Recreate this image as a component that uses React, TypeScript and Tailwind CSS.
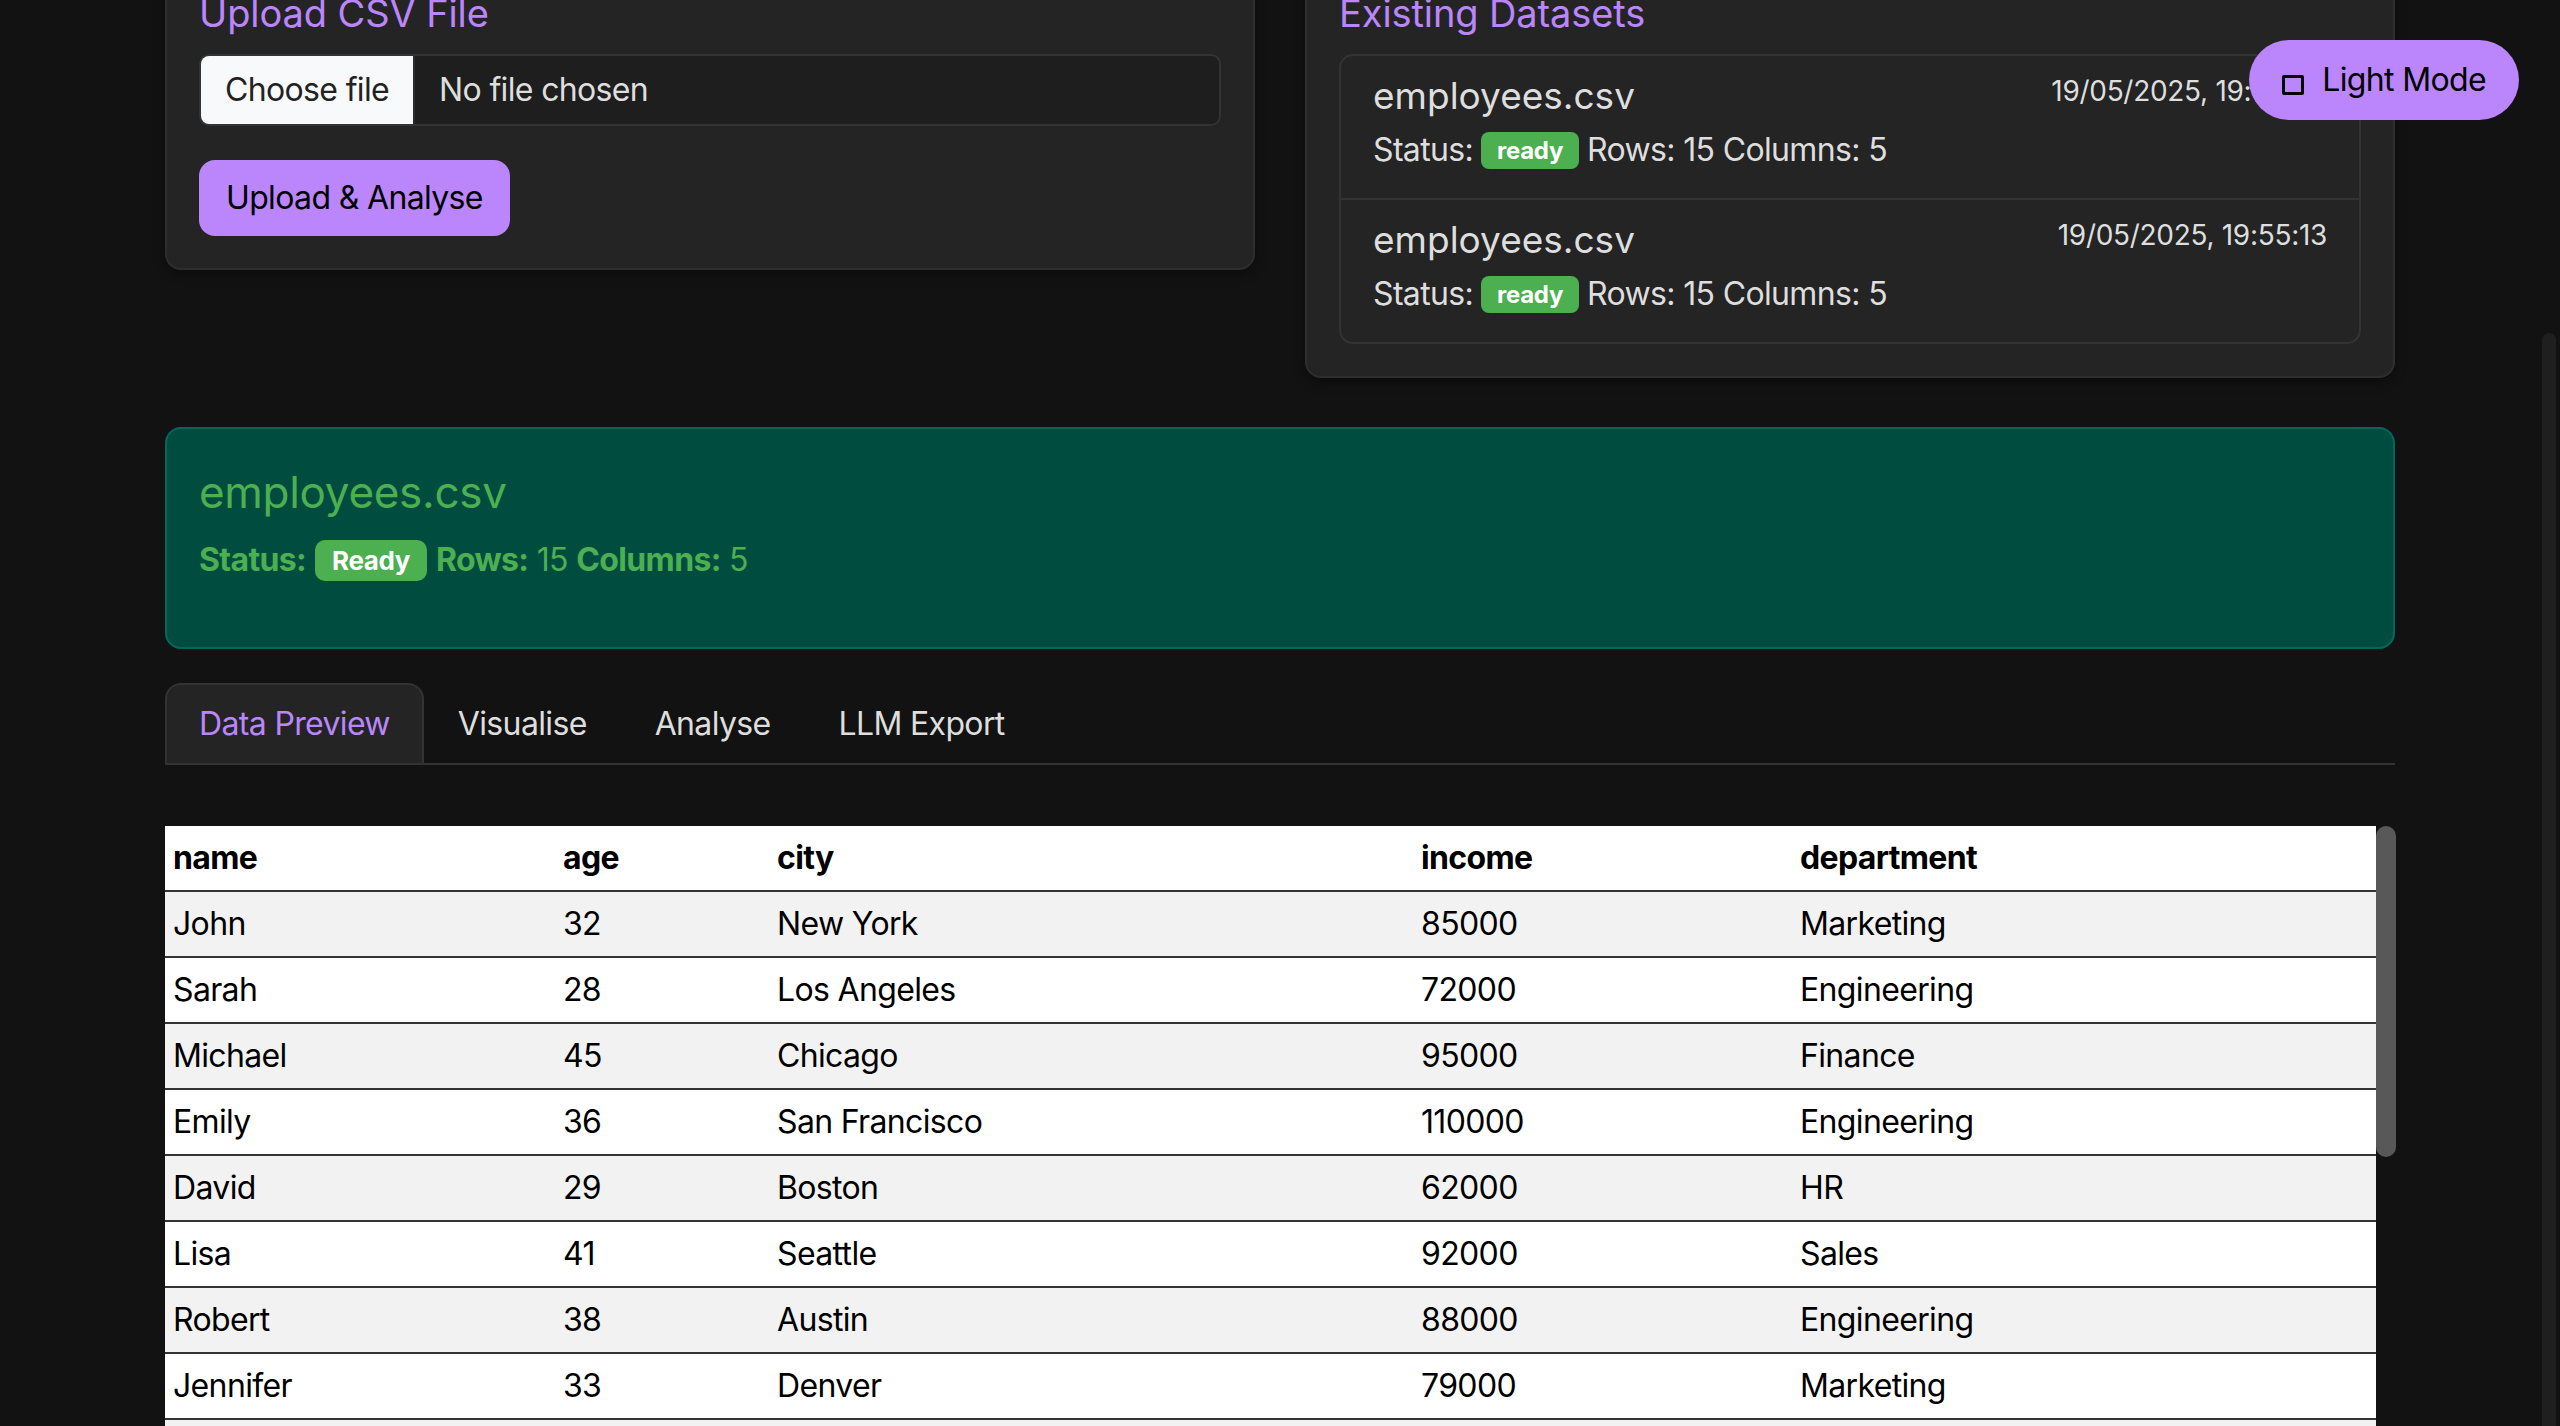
import React from "react";

const rows = [
  ["John", "32", "New York", "85000", "Marketing"],
  ["Sarah", "28", "Los Angeles", "72000", "Engineering"],
  ["Michael", "45", "Chicago", "95000", "Finance"],
  ["Emily", "36", "San Francisco", "110000", "Engineering"],
  ["David", "29", "Boston", "62000", "HR"],
  ["Lisa", "41", "Seattle", "92000", "Sales"],
  ["Robert", "38", "Austin", "88000", "Engineering"],
  ["Jennifer", "33", "Denver", "79000", "Marketing"],
  ["James", "44", "Chicago", "105000", "Finance"],
  ["Amanda", "31", "Portland", "71000", "HR"],
];

function DatasetItem({ time, last }: { time: string; last?: boolean }) {
  return (
    <div className={`px-[32px] pt-[14px] pb-[24px] ${last ? "" : "border-b-2 border-[#333]"}`}>
      <div className="flex items-start justify-between">
        <div className="mt-[4px] text-[37px] leading-[43px] text-[#dedede] tracking-[0px]">employees.csv</div>
        <div className="text-[28px] leading-[42px] text-[#dedede] tracking-[-0.3px]">{time}</div>
      </div>
      <div className="mt-[9px] flex items-center gap-[8px] text-[32px] leading-[48px] text-[#dedede]">
        <span>Status:</span>
        <span className="h-[37px] px-[16px] rounded-[8px] bg-[#4caf50] text-white font-bold text-[24px] leading-[37px] tracking-[-0.3px]">ready</span>
        <span>Rows: 15 Columns: 5</span>
      </div>
    </div>
  );
}

export default function App() {
  return (
    <div className="relative h-[1426px] overflow-hidden bg-[#121212] text-[#dedede] font-['Inter','Noto_Sans',sans-serif] text-[32px] leading-[48px] tracking-[-0.65px]">
      <div className="w-[2230px] mx-auto -mt-[43px]">
        <div className="grid grid-cols-2 gap-[50px] items-start">
          {/* Upload card */}
          <div className="rounded-[16px] border-2 border-[#2e2e2e] bg-[#242424] px-[32px] pt-[32px] pb-[32px] shadow-[0_4px_12px_rgba(0,0,0,0.35)]">
            <h3 className="text-[38px] leading-[45px] text-[#bb86fc] mb-[18px] tracking-[-0.1px]">Upload CSV File</h3>
            <div className="flex h-[72px] w-full overflow-hidden rounded-[10px] border-2 border-[#333] bg-[#1e1e1e]">
              <div className="flex items-center bg-[#f8f9fa] px-[24px] text-[#222] border-r-2 border-[#2a2a2a]">Choose file</div>
              <div className="flex items-center pl-[24px] text-[#dedede]">No file chosen</div>
            </div>
            <button className="mt-[34px] h-[76px] rounded-[16px] bg-[#bb86fc] px-[27px] text-black text-[32px]">Upload &amp; Analyse</button>
          </div>

          {/* Existing datasets */}
          <div className="rounded-[16px] border-2 border-[#2e2e2e] bg-[#242424] px-[32px] pt-[32px] pb-[32px] shadow-[0_4px_12px_rgba(0,0,0,0.35)]">
            <h3 className="text-[38px] leading-[45px] text-[#bb86fc] mb-[18px] tracking-[-0.1px]">Existing Datasets</h3>
            <div className="rounded-[14px] border-2 border-[#333]">
              <DatasetItem time="19/05/2025, 19:56:02" />
              <DatasetItem time="19/05/2025, 19:55:13" last />
            </div>
          </div>
        </div>

        {/* Selected dataset */}
        <div className="mt-[49px] rounded-[16px] border-2 border-[#00695c] bg-[#004d40] px-[32px] pt-[37px] pb-[63px]">
          <h2 className="text-[44px] leading-[52px] text-[#4caf50] tracking-[-0.3px]">employees.csv</h2>
          <div className="mt-[18px] flex items-center gap-[9px] text-[32px] leading-[48px] text-[#4caf50]">
            <span className="font-bold">Status:</span>
            <span className="h-[41px] px-[17px] rounded-[10px] bg-[#4caf50] text-white font-bold text-[26px] leading-[41px] tracking-[-0.4px]">Ready</span>
            <span>
              <span className="font-bold">Rows:</span> 15 <span className="font-bold">Columns:</span> 5
            </span>
          </div>
        </div>

        {/* Tabs */}
        <div className="mt-[34px] flex border-b-2 border-[#333]">
          <div className="rounded-t-[16px] border-2 border-b-0 border-[#333] bg-[#242424] px-[32px] py-[15px] text-[#bb86fc]">Data Preview</div>
          <div className="border-2 border-b-0 border-transparent px-[32px] py-[15px] text-[#dedede]">Visualise</div>
          <div className="border-2 border-b-0 border-transparent px-[32px] py-[15px] text-[#dedede]">Analyse</div>
          <div className="border-2 border-b-0 border-transparent px-[32px] py-[15px] text-[#dedede]">LLM Export</div>
        </div>

        {/* Table */}
        <div className="mt-[61px] flex">
          <table className="w-[2211px] table-fixed border-collapse bg-white text-black">
            <colgroup>
              <col className="w-[390px]" />
              <col className="w-[214px]" />
              <col className="w-[644px]" />
              <col className="w-[379px]" />
              <col />
            </colgroup>
            <thead>
              <tr className="bg-white">
                {["name", "age", "city", "income", "department"].map((h) => (
                  <th key={h} className="border-b-2 border-[#333] px-[8px] py-[8px] text-left font-bold leading-[48px]">{h}</th>
                ))}
              </tr>
            </thead>
            <tbody>
              {rows.map((r, i) => (
                <tr key={i} className={i % 2 === 0 ? "bg-[#f2f2f2]" : "bg-white"}>
                  {r.map((c, j) => (
                    <td key={j} className="border-b-2 border-[#333] px-[8px] py-[8px] leading-[48px]">{c}</td>
                  ))}
                </tr>
              ))}
            </tbody>
          </table>
          <div className="w-[19px]">
            <div className="h-[331px] w-[20px] rounded-full bg-[#585858]"></div>
          </div>
        </div>
      </div>

      {/* Theme toggle */}
      <button className="fixed top-[40px] right-[41px] flex h-[80px] items-center gap-[18px] rounded-full bg-[#bb86fc] px-[33px] text-black text-[32px]">
        <span className="mt-[10px] block h-[20px] w-[22px] border-[3px] border-black rounded-[2px]"></span>
        <span>Light Mode</span>
      </button>

      {/* Page scrollbar */}
      <div className="fixed right-[4px] top-[333px] h-[1200px] w-[14px] rounded-full bg-[#1f1f1f]"></div>
    </div>
  );
}
